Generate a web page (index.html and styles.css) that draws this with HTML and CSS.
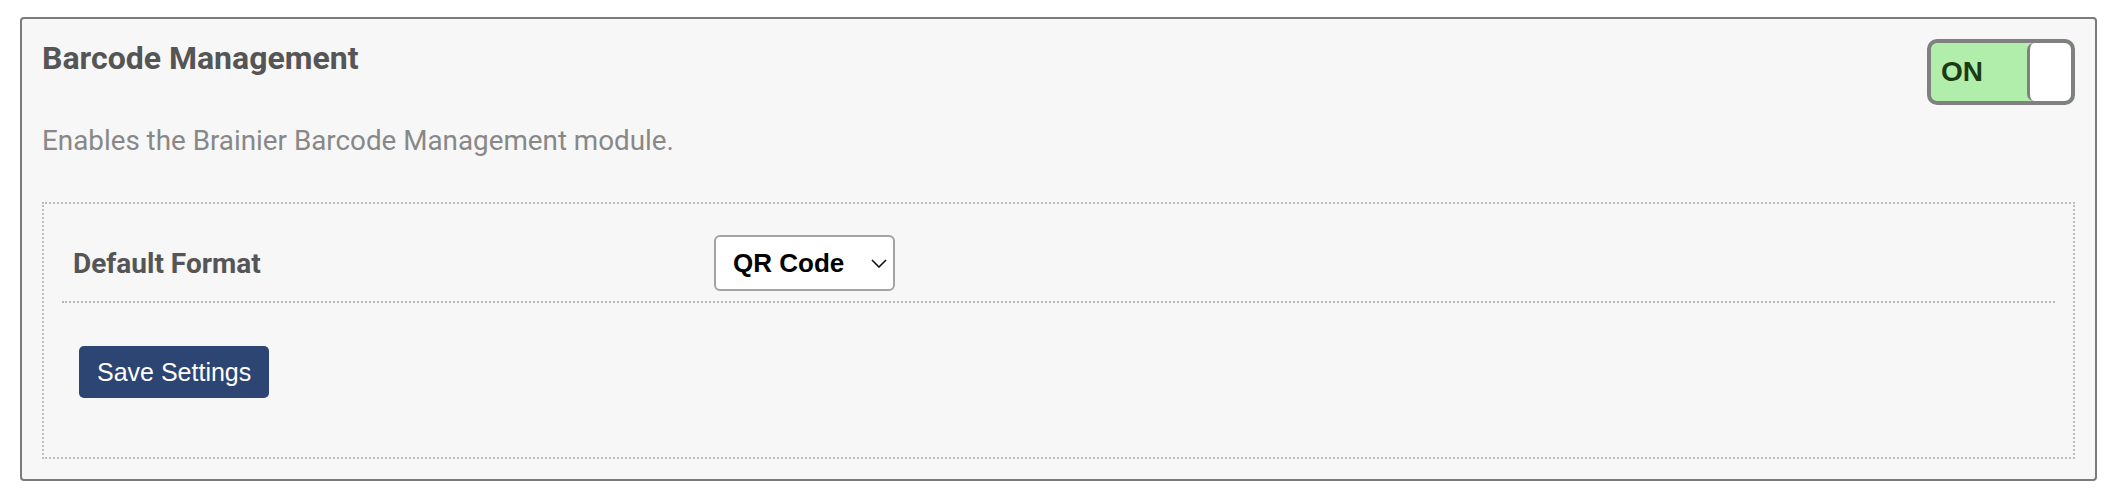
FILE: index.html
```html
<!DOCTYPE html>
<html>
<head>
<meta charset="utf-8">
<link rel="stylesheet" href="styles.css">
</head>
<body>
<section class="module">
  <div class="module-head">
    <h3 class="module-title">Barcode Management</h3>
    <div class="toggle">
      <span class="toggle-label">ON</span>
      <span class="toggle-knob"></span>
    </div>
  </div>
  <p class="module-desc">Enables the Brainier Barcode Management module.</p>
  <div class="settings">
    <div class="setting-row">
      <label class="setting-label" for="fmt">Default Format</label>
      <div class="select-wrap">
        <select id="fmt" class="select">
          <option>QR Code</option>
          <option>Code 128</option>
        </select>
        <svg class="chevron" width="16" height="9" viewBox="0 0 16 9"><path d="M1 1 L8 8 L15 1" fill="none" stroke="#111" stroke-width="1.6"/></svg>
      </div>
    </div>
    <div class="actions">
      <button class="btn-save">Save Settings</button>
    </div>
  </div>
</section>
</body>
</html>
```
FILE: styles.css
```css
html, body {
  margin: 0;
  padding: 0;
  background: #ffffff;
}
body {
  padding: 17px 30px 0 20px;
}
.module {
  background: #f7f7f7;
  border: 2px solid #7b7b7b;
  border-radius: 4px;
  padding: 20px;
  height: 464px;
  box-sizing: border-box;
}
.module-head {
  display: flex;
  justify-content: space-between;
  align-items: flex-start;
}
.module-title {
  margin: 0;
  font-family: Roboto, "Liberation Sans", sans-serif;
  font-weight: 700;
  font-size: 32px;
  line-height: 1.2;
  color: #555555;
}
.toggle {
  width: 148px;
  height: 66px;
  box-sizing: border-box;
  border: 4px solid #808080;
  border-radius: 10px;
  background: #b2eeab;
  display: flex;
  align-items: center;
  justify-content: space-between;
  overflow: hidden;
}
.toggle-label {
  padding-left: 10px;
  font-family: "Liberation Sans", Arial, sans-serif;
  font-weight: 700;
  font-size: 28px;
  color: #1b3a13;
}
.toggle-knob {
  width: 44px;
  height: 100%;
  box-sizing: border-box;
  background: #ffffff;
  border-left: 3px solid #808080;
  border-radius: 7px;
}
.module-desc {
  margin: 19px 0 0;
  font-family: Roboto, "Liberation Sans", sans-serif;
  font-size: 27.8px;
  line-height: 1.2;
  color: #888888;
}
.settings {
  margin-top: 45px;
  border: 2px dotted #bdbdbd;
  padding: 20px 18px;
}
.setting-row {
  display: grid;
  grid-template-columns: 641px auto;
  align-items: center;
  padding: 11px 0 10px 11px;
  border-bottom: 2px dotted #b4b4b4;
}
.setting-label {
  font-family: Roboto, "Liberation Sans", sans-serif;
  font-weight: 700;
  font-size: 28px;
  color: #555555;
}
.select-wrap {
  position: relative;
  width: 181px;
  height: 56px;
}
.select {
  appearance: none;
  -webkit-appearance: none;
  width: 181px;
  height: 56px;
  box-sizing: border-box;
  border: 2px solid #a3a3a3;
  border-radius: 6px;
  background: #ffffff;
  padding: 0 0 0 17px;
  font-family: "Liberation Sans", Arial, sans-serif;
  font-weight: 700;
  font-size: 26px;
  color: #000000;
}
.chevron {
  position: absolute;
  left: 157px;
  top: 24px;
  pointer-events: none;
}
.actions {
  padding: 43px 17px 39px;
}
.btn-save {
  display: block;
  height: 52px;
  padding: 0 18px;
  border: none;
  border-radius: 5px;
  background: #2c4573;
  color: #ffffff;
  font-family: "Liberation Sans", Arial, sans-serif;
  font-size: 25px;
}
```
